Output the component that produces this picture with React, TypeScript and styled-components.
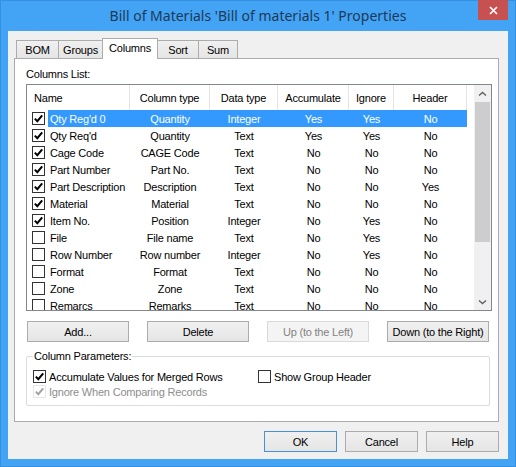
import React from "react";
import styled, { createGlobalStyle, css } from "styled-components";

const GlobalStyle = createGlobalStyle`
  html, body {
    margin: 0;
    padding: 0;
  }
  body {
    width: 516px;
    height: 467px;
    overflow: hidden;
    font-family: "Liberation Sans", Arial, sans-serif;
    font-size: 11px;
    letter-spacing: -0.2px;
    color: #000;
  }
  * {
    box-sizing: border-box;
  }
`;

const Window = styled.div`
  width: 516px;
  height: 467px;
  display: flex;
  flex-direction: column;
  padding: 0 7px 7px 7px;
  background: #43a3f5;
  border: 1px solid #3590e2;
`;

const TitleBar = styled.div`
  height: 30px;
  display: flex;
  align-items: flex-start;
`;

const TitleSpacer = styled.div`
  width: 30px;
`;

const Title = styled.div`
  flex: 1;
  height: 30px;
  line-height: 29px;
  text-align: center;
  font-family: "Noto Sans", "Open Sans", sans-serif;
  font-size: 14px;
  letter-spacing: 0;
  color: #1e3a55;
  white-space: nowrap;
`;

const CloseButton = styled.div`
  width: 30px;
  height: 20px;
  margin-top: -1px;
  background: #c75050;
  display: flex;
  align-items: center;
  justify-content: center;
`;

const Client = styled.div`
  flex: 1;
  display: flex;
  flex-direction: column;
  padding: 7px 9px 7px 6px;
  background: #f0f0f0;
`;

const TabStrip = styled.div`
  height: 21px;
  margin-bottom: -1px;
  padding-left: 2px;
  display: flex;
  align-items: flex-start;
  position: relative;
  z-index: 1;
`;

const Tab = styled.div<{ $w: number; $active?: boolean }>`
  width: ${({ $w }) => $w}px;
  height: 18px;
  margin-top: 2px;
  margin-right: -1px;
  display: flex;
  align-items: center;
  justify-content: center;
  padding-top: 1px;
  border: 1px solid #acacac;
  border-bottom: none;
  background: linear-gradient(#f0f0f0, #e5e5e5);

  ${({ $active }) =>
    $active &&
    css`
      height: 21px;
      margin-top: 0;
      padding-top: 0;
      padding-bottom: 3px;
      background: #fff;
      position: relative;
      z-index: 2;
    `}
`;

const Panel = styled.div`
  height: 364px;
  display: flex;
  flex-direction: column;
  padding: 9px 6px 0 11px;
  background: #fff;
  border: 1px solid #acacac;
`;

const Caption = styled.div`
  height: 13px;
  line-height: 13px;
  margin-bottom: 3px;
`;

const ListBox = styled.div`
  height: 227px;
  display: flex;
  border: 1px solid #828790;
  overflow: hidden;
`;

const Table = styled.div`
  flex: 1;
  display: flex;
  flex-direction: column;
`;

const HeaderRow = styled.div`
  height: 25px;
  display: flex;
  flex-shrink: 0;
`;

const HeaderCell = styled.div<{ $w: number; $left?: boolean }>`
  width: ${({ $w }) => $w}px;
  display: flex;
  align-items: center;
  justify-content: ${({ $left }) => ($left ? "flex-start" : "center")};
  padding-left: ${({ $left }) => ($left ? "7px" : "0")};
  border-right: 1px solid #e5e5e5;
  white-space: nowrap;
`;

const Row = styled.div`
  height: 17px;
  display: flex;
  flex-shrink: 0;
`;

const CheckCell = styled.div`
  width: 21px;
  display: flex;
  align-items: center;
  padding-left: 5px;
`;

const RowBody = styled.div<{ $selected?: boolean }>`
  display: flex;
  ${({ $selected }) =>
    $selected &&
    css`
      background: #3399ff;
      color: #fff;
    `}
`;

const Cell = styled.div<{ $w: number; $left?: boolean }>`
  width: ${({ $w }) => $w}px;
  display: flex;
  align-items: center;
  justify-content: ${({ $left }) => ($left ? "flex-start" : "center")};
  padding-left: ${({ $left }) => ($left ? "2px" : "0")};
  white-space: nowrap;
  overflow: hidden;
`;

const ScrollBar = styled.div`
  width: 17px;
  display: flex;
  flex-direction: column;
  background: #f0f0f0;
`;

const ScrollArrow = styled.div`
  height: 17px;
  display: flex;
  align-items: center;
  justify-content: center;
  flex-shrink: 0;
`;

const ScrollThumb = styled.div`
  height: 140px;
  margin: 0 1px;
  background: #cdcdcd;
`;

const ScrollTrack = styled.div`
  flex: 1;
`;

const ButtonRow = styled.div`
  margin-top: 10px;
  padding-left: 1px;
  display: flex;
  gap: 18px;
`;

const Button = styled.div<{ $w: number; $disabled?: boolean; $default?: boolean }>`
  width: ${({ $w }) => $w}px;
  height: 21px;
  display: flex;
  align-items: center;
  justify-content: center;
  border: 1px solid #acacac;
  background: linear-gradient(#f0f0f0, #e5e5e5);
  white-space: nowrap;

  ${({ $disabled }) =>
    $disabled &&
    css`
      border-color: #d9d9d9;
      background: #f4f4f4;
      color: #838383;
    `}

  ${({ $default }) =>
    $default &&
    css`
      border-color: #4a90d9;
    `}
`;

const GroupBox = styled.fieldset`
  width: 464px;
  margin: 8px 0 0 0;
  padding: 6px;
  border: 1px solid #dcdcdc;
  border-radius: 2px;
`;

const Legend = styled.legend`
  padding: 0 1px;
  line-height: 13px;
`;

const OptionGrid = styled.div`
  display: grid;
  grid-template-columns: 225px auto;
  grid-auto-rows: 15px;
`;

const Option = styled.div<{ $disabled?: boolean }>`
  display: flex;
  align-items: center;
  gap: 3px;
  white-space: nowrap;
  color: ${({ $disabled }) => ($disabled ? "#8d8d8d" : "#000")};
`;

const Footer = styled.div`
  margin-top: 9px;
  display: flex;
  justify-content: flex-end;
  gap: 8px;
`;

const Box = styled.span<{ $disabled?: boolean }>`
  width: 13px;
  height: 13px;
  flex-shrink: 0;
  display: flex;
  align-items: center;
  justify-content: center;
  background: #fff;
  border: 1px solid ${({ $disabled }) => ($disabled ? "#e6e6e6" : "#333")};
`;

const CheckBox = ({ checked, disabled }: { checked?: boolean; disabled?: boolean }) => (
  <Box $disabled={disabled}>
    {checked && (
      <svg width="11" height="11" viewBox="0 0 11 11">
        <polyline
          points="1.8,5.6 4.3,8.2 9.2,2.4"
          fill="none"
          stroke={disabled ? "#a3a3a3" : "#000"}
          strokeWidth="2"
        />
      </svg>
    )}
  </Box>
);

const Chevron = ({ down }: { down?: boolean }) => (
  <svg width="9" height="6" viewBox="0 0 9 6">
    <polyline
      points={down ? "1,1.5 4.5,4.5 8,1.5" : "1,4.5 4.5,1.5 8,4.5"}
      fill="none"
      stroke="#606060"
      strokeWidth="1.4"
    />
  </svg>
);

const columns = [
  { title: "Name", width: 103 },
  { title: "Column type", width: 80 },
  { title: "Data type", width: 68 },
  { title: "Accumulate", width: 71 },
  { title: "Ignore", width: 45 },
  { title: "Header", width: 73 },
];

type Item = {
  on: boolean;
  name: string;
  type: string;
  data: string;
  acc: string;
  ign: string;
  head: string;
  selected?: boolean;
};

const items: Item[] = [
  { on: true, name: "Qty Reg'd 0", type: "Quantity", data: "Integer", acc: "Yes", ign: "Yes", head: "No", selected: true },
  { on: true, name: "Qty Req'd", type: "Quantity", data: "Text", acc: "Yes", ign: "Yes", head: "No" },
  { on: true, name: "Cage Code", type: "CAGE Code", data: "Text", acc: "No", ign: "No", head: "No" },
  { on: true, name: "Part Number", type: "Part No.", data: "Text", acc: "No", ign: "No", head: "No" },
  { on: true, name: "Part Description", type: "Description", data: "Text", acc: "No", ign: "No", head: "Yes" },
  { on: true, name: "Material", type: "Material", data: "Text", acc: "No", ign: "No", head: "No" },
  { on: true, name: "Item No.", type: "Position", data: "Integer", acc: "No", ign: "Yes", head: "No" },
  { on: false, name: "File", type: "File name", data: "Text", acc: "No", ign: "Yes", head: "No" },
  { on: false, name: "Row Number", type: "Row number", data: "Integer", acc: "No", ign: "Yes", head: "No" },
  { on: false, name: "Format", type: "Format", data: "Text", acc: "No", ign: "No", head: "No" },
  { on: false, name: "Zone", type: "Zone", data: "Text", acc: "No", ign: "No", head: "No" },
  { on: false, name: "Remarcs", type: "Remarks", data: "Text", acc: "No", ign: "No", head: "No" },
];

const tabs = [
  { label: "BOM", width: 43 },
  { label: "Groups", width: 45 },
  { label: "Columns", width: 56, active: true },
  { label: "Sort", width: 42 },
  { label: "Sum", width: 40 },
];

const App = () => {
  return (
    <Window>
      <GlobalStyle />
      <TitleBar>
        <TitleSpacer />
        <Title>Bill of Materials 'Bill of materials 1' Properties</Title>
        <CloseButton>
          <svg width="9" height="9" viewBox="0 0 9 9">
            <path d="M1 1 L8 8 M8 1 L1 8" stroke="#fff" strokeWidth="1.7" />
          </svg>
        </CloseButton>
      </TitleBar>
      <Client>
        <TabStrip>
          {tabs.map((t) => (
            <Tab key={t.label} $w={t.width} $active={t.active}>
              {t.label}
            </Tab>
          ))}
        </TabStrip>
        <Panel>
          <Caption>Columns List:</Caption>
          <ListBox>
            <Table>
              <HeaderRow>
                {columns.map((c, i) => (
                  <HeaderCell key={c.title} $w={c.width} $left={i === 0}>
                    {c.title}
                  </HeaderCell>
                ))}
              </HeaderRow>
              {items.map((it) => (
                <Row key={it.name}>
                  <CheckCell>
                    <CheckBox checked={it.on} />
                  </CheckCell>
                  <RowBody $selected={it.selected}>
                    <Cell $w={82} $left>
                      {it.name}
                    </Cell>
                    <Cell $w={80}>{it.type}</Cell>
                    <Cell $w={68}>{it.data}</Cell>
                    <Cell $w={71}>{it.acc}</Cell>
                    <Cell $w={45}>{it.ign}</Cell>
                    <Cell $w={73}>{it.head}</Cell>
                  </RowBody>
                </Row>
              ))}
            </Table>
            <ScrollBar>
              <ScrollArrow>
                <Chevron />
              </ScrollArrow>
              <ScrollThumb />
              <ScrollTrack />
              <ScrollArrow>
                <Chevron down />
              </ScrollArrow>
            </ScrollBar>
          </ListBox>
          <ButtonRow>
            <Button $w={102}>Add...</Button>
            <Button $w={102}>Delete</Button>
            <Button $w={102} $disabled>
              Up (to the Left)
            </Button>
            <Button $w={102}>Down (to the Right)</Button>
          </ButtonRow>
          <GroupBox>
            <Legend>Column Parameters:</Legend>
            <OptionGrid>
              <Option>
                <CheckBox checked />
                Accumulate Values for Merged Rows
              </Option>
              <Option>
                <CheckBox />
                Show Group Header
              </Option>
              <Option $disabled>
                <CheckBox checked disabled />
                Ignore When Comparing Records
              </Option>
            </OptionGrid>
          </GroupBox>
        </Panel>
        <Footer>
          <Button $w={73} $default>
            OK
          </Button>
          <Button $w={73}>Cancel</Button>
          <Button $w={73}>Help</Button>
        </Footer>
      </Client>
    </Window>
  );
};

export default App;
